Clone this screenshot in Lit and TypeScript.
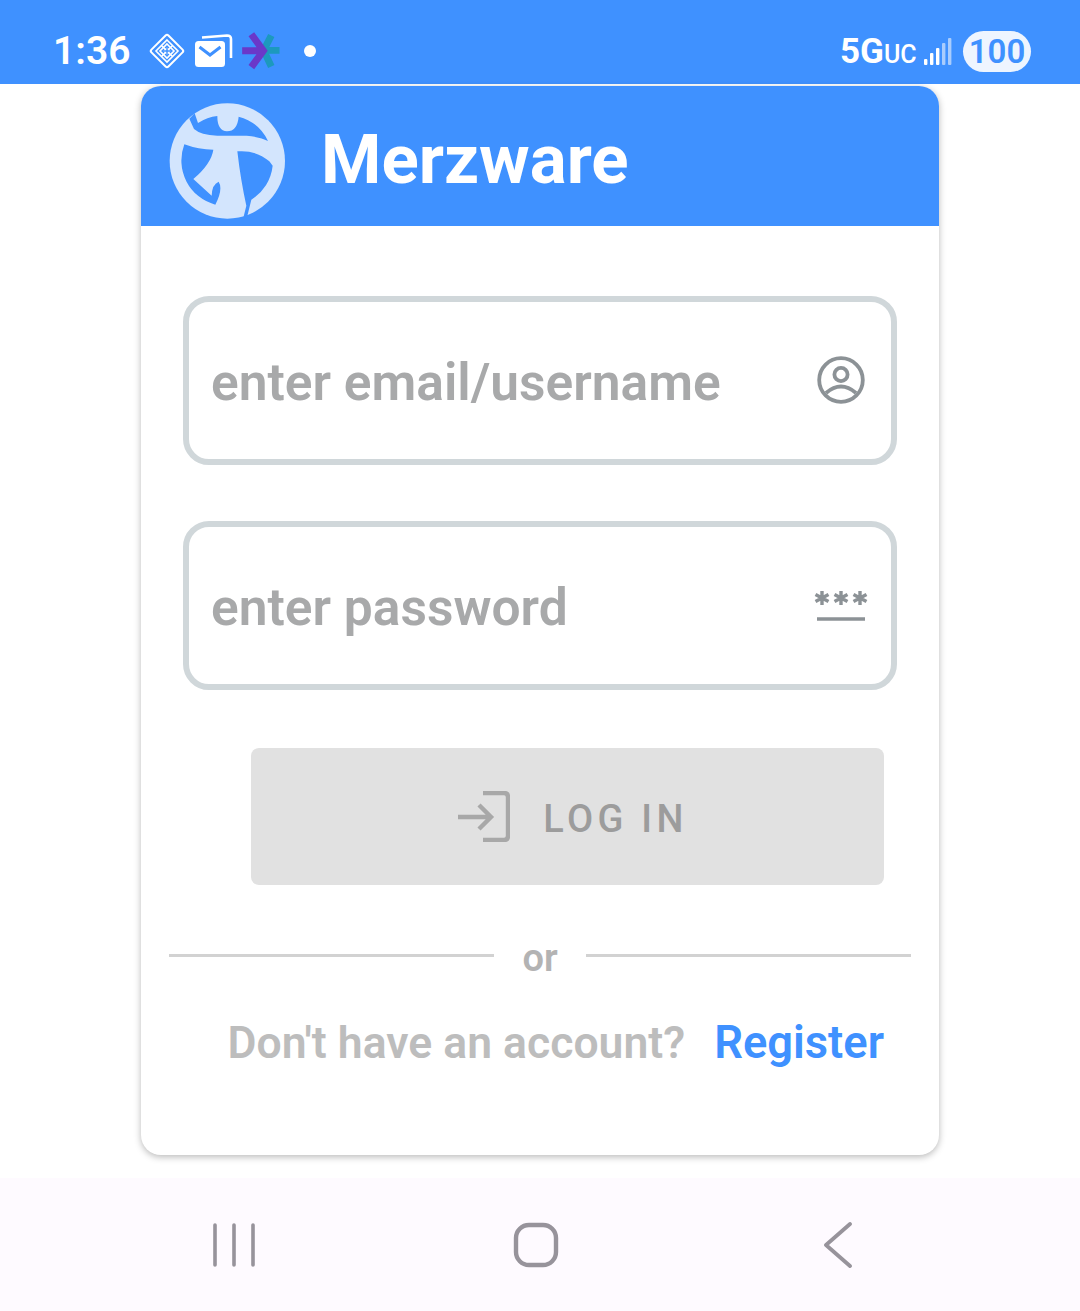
import { LitElement, html, css, svg } from 'lit';
import { customElement } from 'lit/decorators.js';

const logo = svg`
  <svg class="logo" viewBox="114 62 360 360">
    <circle cx="292" cy="242" r="173" fill="#d3e5fd"></circle>
    <path fill="#3f91ff" d="M178 115 L194 99 L204 128 Q232 110 262 107 Q262 152 291 153 Q322 152 326 109
      A137 137 0 0 1 414 182 Q390 170 350 166 Q300 166 262 166 Q212 164 192 146 Z"></path>
    <path fill="#3f91ff" d="M163 192 Q206 208 250 208 Q244 250 190 296 L245 346 Q246 312 266 304 Q280 326 256 373
      A137 137 0 0 1 163 192 Z"></path>
    <path fill="#3f91ff" d="M322 213 Q376 208 418 243 L428 256 A137 137 0 0 1 364 358 L352 407 L340 412 L349 376 Q332 300 322 213 Z"></path>
  </svg>`;

const diamondIcon = svg`
  <svg class="st-diamond" viewBox="0 0 38 38" fill="none" stroke="#fff">
    <rect x="7" y="7" width="24" height="24" rx="2" transform="rotate(45 19 19)" stroke-width="2"></rect>
    <path d="M19 8 L30 19 L19 30 L8 19 Z M13.5 13.5 L24.5 24.5 M24.5 13.5 L13.5 24.5" stroke-width="1.6"></path>
    <path d="M19 12 L26 19 L19 26 L12 19 Z" stroke-width="1.6"></path>
    <path d="M19 15 L23 19 L19 23 L15 19 Z" fill="#fff" stroke="none"></path>
    <path d="M15 19 L23 19 M19 15 L19 23" stroke="#3f91ff" stroke-width="1.4"></path>
  </svg>`;

const mailIcon = svg`
  <svg class="st-mail" viewBox="0 0 38 34">
    <path d="M7 3.5 L32 1.5 Q36 1.5 36 5 L36 24" fill="none" stroke="#fff" stroke-width="2.6"></path>
    <rect x="0" y="7" width="30" height="26" rx="3.5" fill="#fff"></rect>
    <path d="M4.5 13 L15 21 L25.5 13" fill="none" stroke="#3f91ff" stroke-width="3"></path>
  </svg>`;

const starIcon = svg`
  <svg class="st-star" viewBox="720 95 125 120" fill="none" stroke-width="22">
    <path d="M800 153 L841 153 M815 106 L791 153 L815 204" stroke="#1c99bd"></path>
    <path d="M723 154 L780 154 M752 102 L790 154 L752 206" stroke="#6a38c9"></path>
  </svg>`;

const signalIcon = svg`
  <svg class="st-signal" viewBox="0 0 28 27">
    <rect x="0" y="21" width="3.4" height="6" rx="1" fill="#fff"></rect>
    <rect x="6" y="15" width="3.4" height="12" rx="1" fill="#fff"></rect>
    <rect x="12" y="10" width="3.4" height="17" rx="1" fill="#fff"></rect>
    <rect x="18" y="5" width="3.4" height="22" rx="1" fill="#a9ccfd"></rect>
    <rect x="24" y="0" width="3.4" height="27" rx="1" fill="#a9ccfd"></rect>
  </svg>`;

const userIcon = svg`
  <svg class="field-icon" viewBox="0 0 48 48" fill="none" stroke="#8c9296" stroke-width="3.8">
    <circle cx="24" cy="24" r="21.8"></circle>
    <circle cx="24" cy="18.5" r="6.6"></circle>
    <path d="M9 37 Q24 24 39 37"></path>
  </svg>`;

const asterisksIcon = svg`
  <svg class="field-icon pass" viewBox="0 0 54 34" fill="none">
    <g stroke="#8c9296" stroke-width="3.4">
      <path d="M8 2 V16 M1.5 5.5 L14.5 12.5 M14.5 5.5 L1.5 12.5"></path>
      <path d="M27 2 V16 M20.5 5.5 L33.5 12.5 M33.5 5.5 L20.5 12.5"></path>
      <path d="M46 2 V16 M39.5 5.5 L52.5 12.5 M52.5 5.5 L39.5 12.5"></path>
    </g>
    <path d="M3 30 H51" stroke="#8c9296" stroke-width="3.6"></path>
  </svg>`;

const loginIcon = svg`
  <svg class="login-icon" viewBox="0 0 52 51" fill="none" stroke="#a8a8a8" stroke-width="4.4">
    <path d="M25 2 H46 Q50 2 50 6 V45 Q50 49 46 49 H25"></path>
    <path d="M0 26 H33 M21 14 L33 26 L21 38"></path>
  </svg>`;

@customElement('app-root')
export class AppRoot extends LitElement {
  static styles = css`
    :host {
      display: flex;
      flex-direction: column;
      height: 1311px;
      background: #fff;
      font-family: Roboto, 'Liberation Sans', sans-serif;
      overflow: hidden;
    }
    .status {
      height: 84px;
      flex: none;
      background: #3f91ff;
      color: #fff;
      display: flex;
      align-items: center;
      padding: 18px 49px 0 53px;
      box-sizing: border-box;
    }
    .time {
      font-size: 39px;
      font-weight: 600;
      width: 95px;
    }
    .st-diamond { width: 38px; height: 38px; }
    .st-mail { width: 38px; height: 34px; margin-left: 9px; }
    .st-star { width: 40px; height: 38px; margin-left: 8px; }
    .st-dot {
      width: 12px;
      height: 12px;
      border-radius: 50%;
      background: #fff;
      margin-left: 23px;
    }
    .st-right {
      margin-left: auto;
      display: flex;
      align-items: center;
    }
    .net {
      font-size: 35px;
      font-weight: 700;
      width: 84px;
      white-space: nowrap;
      margin-left: -1px;
    }
    .net small {
      font-size: 25px;
      font-weight: 500;
    }
    .st-signal { width: 28px; height: 27px; margin: 0 11px 0 0; }
    .battery {
      width: 68px;
      height: 41px;
      border-radius: 21px;
      background: #eef5ff;
      color: #3f91ff;
      font-size: 33px;
      font-weight: 600;
      display: flex;
      align-items: center;
      justify-content: center;
    }
    main {
      flex: 1;
      padding-top: 2px;
      display: flex;
      justify-content: center;
    }
    .card {
      width: 798px;
      height: 1069px;
      background: #fff;
      border-radius: 20px;
      box-shadow: 0 2px 7px rgba(0, 0, 0, 0.28);
      overflow: hidden;
    }
    .card-head {
      height: 140px;
      background: #3f91ff;
      display: flex;
      align-items: center;
      padding: 9px 0 0 27px;
      box-sizing: border-box;
    }
    .logo { width: 120px; height: 120px; }
    .brand {
      color: #fff;
      font-size: 69px;
      font-weight: 700;
      margin: -3px 0 0 33px;
    }
    .card-body {
      padding: 70px 42px 0;
    }
    .field {
      width: 714px;
      height: 169px;
      box-sizing: border-box;
      border: 6px solid #d0d7da;
      border-radius: 26px;
      display: flex;
      align-items: center;
      justify-content: space-between;
      padding: 0 26px 0 22px;
      margin-bottom: 56px;
    }
    .field span {
      font-size: 51.5px;
      font-weight: 600;
      color: #a8a9aa;
      position: relative;
      top: 2px;
    }
    .field-icon { width: 48px; height: 48px; position: relative; top: -1px; }
    .field-icon.pass { width: 54px; height: 34px; top: 0; margin-right: -3px; }
    .login {
      margin: 58px 0 0 68px;
      width: 633px;
      height: 137px;
      background: #e1e1e1;
      border-radius: 8px;
      display: flex;
      align-items: center;
      justify-content: center;
      color: #9c9c9c;
      font-size: 38px;
      font-weight: 500;
      letter-spacing: 4.3px;
      padding: 4px 0 0 11px;
      box-sizing: border-box;
    }
    .login-icon { width: 52px; height: 51px; margin-right: 33px; position: relative; top: -2px; }
    .divider {
      margin: 56px -14px 0;
      display: flex;
      align-items: center;
      height: 28px;
    }
    .divider i {
      flex: 1;
      height: 3px;
      background: #d2d2d2;
    }
    .divider span {
      width: 92px;
      text-align: center;
      font-size: 38px;
      font-weight: 600;
      color: #b3b3b3;
      position: relative;
      top: 3px;
    }
    .signup {
      margin-top: 47px;
      display: flex;
      justify-content: flex-end;
      align-items: baseline;
      font-weight: 600;
      gap: 29px;
      padding-right: 13px;
    }
    .signup span { color: #bdbdbd; font-size: 44.5px; }
    .signup a { color: #3f91ff; font-size: 45.3px; }
    .nav {
      height: 133px;
      flex: none;
      background: #fefaff;
      display: grid;
      grid-template-columns: repeat(3, 302px);
      padding-left: 83px;
      align-items: center;
      justify-items: center;
    }
    .nav svg { display: block; }
  `;

  render() {
    return html`
      <div class="status">
        <div class="time">1:36</div>
        ${diamondIcon}${mailIcon}${starIcon}
        <div class="st-dot"></div>
        <div class="st-right">
          <div class="net">5G<small>UC</small></div>
          ${signalIcon}
          <div class="battery">100</div>
        </div>
      </div>
      <main>
        <div class="card">
          <div class="card-head">
            ${logo}
            <div class="brand">Merzware</div>
          </div>
          <div class="card-body">
            <div class="field"><span>enter email/username</span>${userIcon}</div>
            <div class="field"><span>enter password</span>${asterisksIcon}</div>
            <div class="login">${loginIcon}LOG IN</div>
            <div class="divider"><i></i><span>or</span><i></i></div>
            <div class="signup"><span>Don't have an account?</span><a>Register</a></div>
          </div>
        </div>
      </main>
      <div class="nav">
        <svg width="42" height="44" viewBox="0 0 42 44" stroke="#97939b" stroke-width="3.6" stroke-linecap="round">
          <path d="M2 2 V42 M21 2 V42 M40 2 V42"></path>
        </svg>
        <svg width="46" height="46" viewBox="0 0 46 46" fill="none" stroke="#97939b" stroke-width="4.4">
          <rect x="3" y="3" width="40" height="40" rx="13"></rect>
        </svg>
        <svg width="30" height="46" viewBox="0 0 30 46" fill="none" stroke="#97939b" stroke-width="3.8" stroke-linecap="round" stroke-linejoin="round">
          <path d="M27 2 L3 23 L27 44"></path>
        </svg>
      </div>
    `;
  }
}

declare global {
  interface HTMLElementTagNameMap {
    'app-root': AppRoot;
  }
}
